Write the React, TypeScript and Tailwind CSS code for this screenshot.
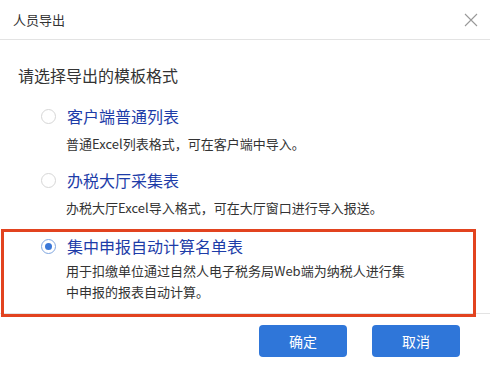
import { useState } from "react";

const OPTIONS = [
  { label: "客户端普通列表", desc: ["普通Excel列表格式，可在客户端中导入。"] },
  { label: "办税大厅采集表", desc: ["办税大厅Excel导入格式，可在大厅窗口进行导入报送。"] },
  {
    label: "集中申报自动计算名单表",
    desc: ["用于扣缴单位通过自然人电子税务局Web端为纳税人进行集", "中申报的报表自动计算。"],
  },
];

const font = { fontFamily: '"Microsoft YaHei", "Noto Sans CJK SC", sans-serif' };

const App = () => {
  const [selected, setSelected] = useState(2);

  return (
    <div className="relative w-[490px] h-[366px] bg-white overflow-hidden text-[#333]" style={font}>
      {/* header */}
      <div className="h-[40px] flex items-center justify-between pl-[13px] pr-[12px] border-b border-[#e3e3e3]">
        <span className="text-[13px] text-[#333]">人员导出</span>
        <svg width="14" height="14" viewBox="0 0 14 14" className="text-[#999]">
          <path d="M1 1L13 13M13 1L1 13" stroke="currentColor" strokeWidth="1.1" />
        </svg>
      </div>

      {/* body */}
      <div className="pl-[18px] pt-[24px] h-[273px]">
        <p className="text-[16px] leading-[22px] text-[#333]">请选择导出的模板格式</p>
        <div className="mt-[19px] pl-[23px] flex flex-col">
          {OPTIONS.map((opt, i) => (
            <div key={opt.label} className={i === 0 ? "" : i === 1 ? "mt-[15px]" : "mt-[17px]"}>
              <button
                onClick={() => setSelected(i)}
                className="flex items-center gap-[11px] h-[22px]"
              >
                <span
                  className={
                    "w-[15px] h-[15px] rounded-full border flex items-center justify-center " +
                    (selected === i ? "border-[#7fa6e0]" : "border-[#d6d6d6]")
                  }
                >
                  {selected === i && <span className="w-[7px] h-[7px] rounded-full bg-[#3b78d8]" />}
                </span>
                <span className="text-[16px] leading-[22px] text-[#1d3ca8]">{opt.label}</span>
              </button>
              <div
                className={
                  "pl-[25px] text-[13px] leading-[21px] text-[#333] " +
                  (i === 2 ? "mt-[3px]" : "mt-[6px]")
                }
              >
                {opt.desc.map((d) => (
                  <p key={d}>{d}</p>
                ))}
              </div>
            </div>
          ))}
        </div>
      </div>

      {/* footer */}
      <div className="border-t border-[#e3e3e3] flex justify-end gap-[25px] pr-[30px] pt-[11px]">
        <button className="w-[88px] h-[32px] rounded-[4px] bg-[#2f76d9] text-white text-[14px]">确定</button>
        <button className="w-[88px] h-[32px] rounded-[4px] bg-[#2f76d9] text-white text-[14px]">取消</button>
      </div>

      {/* highlight annotation */}
      <div className="absolute left-[1px] top-[229px] w-[475px] h-[88px] border-[3px] border-[#e2431f] pointer-events-none" />
    </div>
  );
};

export default App;
